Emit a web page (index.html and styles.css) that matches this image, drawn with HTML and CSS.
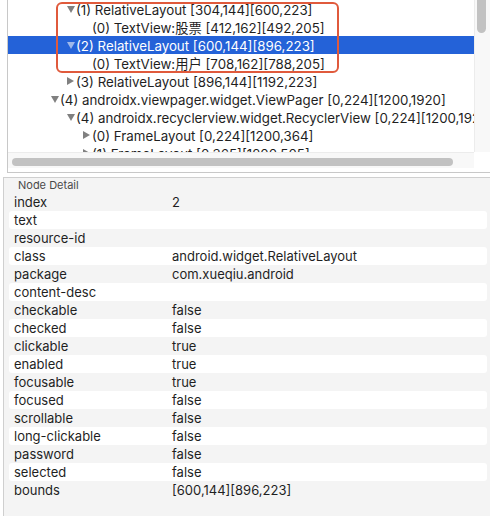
FILE: index.html
```html
<!DOCTYPE html>
<html>
<head>
<meta charset="utf-8">
<link rel="stylesheet" href="styles.css">
</head>
<body>
<div class="app">
  <div class="tree-pane">
    <div class="tree-body">
      <div class="tree-view">
        <div class="row d1"><span class="tog"><i class="tri down"></i></span><span class="lbl">(1) RelativeLayout [304,144][600,223]</span></div>
        <div class="row d2"><span class="tog"></span><span class="lbl">(0) TextView:股票 [412,162][492,205]</span></div>
        <div class="row d1 sel"><span class="tog"><i class="tri down"></i></span><span class="lbl">(2) RelativeLayout [600,144][896,223]</span></div>
        <div class="row d2"><span class="tog"></span><span class="lbl">(0) TextView:用户 [708,162][788,205]</span></div>
        <div class="row d1"><span class="tog"><i class="tri right"></i></span><span class="lbl">(3) RelativeLayout [896,144][1192,223]</span></div>
        <div class="row d0"><span class="tog"><i class="tri down"></i></span><span class="lbl">(4) androidx.viewpager.widget.ViewPager [0,224][1200,1920]</span></div>
        <div class="row d1"><span class="tog"><i class="tri down"></i></span><span class="lbl">(4) androidx.recyclerview.widget.RecyclerView [0,224][1200,1920]</span></div>
        <div class="row d2"><span class="tog"><i class="tri right"></i></span><span class="lbl">(0) FrameLayout [0,224][1200,364]</span></div>
        <div class="row d2"><span class="tog"><i class="tri right"></i></span><span class="lbl">(1) FrameLayout [0,365][1200,505]</span></div>
        <div class="mark"></div>
      </div>
      <div class="vscroll"><div class="vthumb"></div></div>
    </div>
    <div class="hscroll-row">
      <div class="hscroll"><div class="hthumb"></div></div>
      <div class="corner"></div>
    </div>
  </div>

  <div class="detail">
    <div class="legend">Node Detail</div>
    <div class="drow"><span class="k">index</span><span class="v">2</span></div>
    <div class="drow"><span class="k">text</span><span class="v"></span></div>
    <div class="drow"><span class="k">resource-id</span><span class="v"></span></div>
    <div class="drow"><span class="k">class</span><span class="v">android.widget.RelativeLayout</span></div>
    <div class="drow"><span class="k">package</span><span class="v">com.xueqiu.android</span></div>
    <div class="drow"><span class="k">content-desc</span><span class="v"></span></div>
    <div class="drow"><span class="k">checkable</span><span class="v">false</span></div>
    <div class="drow"><span class="k">checked</span><span class="v">false</span></div>
    <div class="drow"><span class="k">clickable</span><span class="v">true</span></div>
    <div class="drow"><span class="k">enabled</span><span class="v">true</span></div>
    <div class="drow"><span class="k">focusable</span><span class="v">true</span></div>
    <div class="drow"><span class="k">focused</span><span class="v">false</span></div>
    <div class="drow"><span class="k">scrollable</span><span class="v">false</span></div>
    <div class="drow"><span class="k">long-clickable</span><span class="v">false</span></div>
    <div class="drow"><span class="k">password</span><span class="v">false</span></div>
    <div class="drow"><span class="k">selected</span><span class="v">false</span></div>
    <div class="drow"><span class="k">bounds</span><span class="v">[600,144][896,223]</span></div>
  </div>
</div>
</body>
</html>
```

FILE: styles.css
```css
* { box-sizing: border-box; }
html, body {
  margin: 0;
  padding: 0;
  background: #ffffff;
}
body {
  width: 490px;
  height: 516px;
  overflow: hidden;
  font-family: Inter, "Liberation Sans", "Noto Sans CJK SC", sans-serif;
  font-size: 13px;
  color: #1f1f1f;
}
.app {
  display: flex;
  flex-direction: column;
  width: 490px;
  height: 516px;
}

/* ---------- tree pane ---------- */
.tree-pane {
  margin-left: 7px;
  border-left: 1px solid #c8c8c8;
  border-bottom: 1px solid #c8c8c8;
  padding-bottom: 4px;
  background: #ffffff;
}
.tree-body {
  display: flex;
  height: 152px;
}
.tree-view {
  position: relative;
  width: 466px;
  height: 152px;
  overflow: hidden;
  background: #ffffff;
  font-size: 13.3px;
}
.row {
  display: flex;
  align-items: center;
  height: 18px;
  line-height: 18px;
  white-space: nowrap;
}
.row.d0 { padding-left: 36px; }
.row.d1 { padding-left: 52px; }
.row.d2 { padding-left: 68px; }
.row.sel {
  background: #2462d8;
  color: #ffffff;
}
.tog {
  flex: none;
  width: 16px;
  height: 18px;
  display: flex;
  align-items: center;
}
.tri {
  display: block;
  width: 0;
  height: 0;
}
.tri.down {
  margin-left: 7px;
  border-left: 4px solid transparent;
  border-right: 4px solid transparent;
  border-top: 7px solid #808080;
}
.tri.right {
  margin-left: 7px;
  border-top: 4px solid transparent;
  border-bottom: 4px solid transparent;
  border-left: 7px solid #808080;
}
.sel .tri.down { border-top-color: #9fb9ea; }
.lbl { flex: none; padding-top: 1px; }

.mark {
  position: absolute;
  left: 48px;
  top: 2px;
  width: 283px;
  height: 71px;
  border: 2px solid #e05a3c;
  border-radius: 6px;
}

.vscroll {
  width: 16px;
  height: 152px;
  background: #f8f8f8;
  border-left: 1px solid #ececec;
  padding-left: 2px;
}
.vthumb {
  width: 9px;
  height: 33px;
  background: #c2c2c2;
  border-radius: 0 0 5px 5px;
}
.hscroll-row {
  display: flex;
  height: 16px;
}
.hscroll {
  width: 466px;
  height: 16px;
  background: #f8f8f8;
  border-top: 1px solid #ececec;
  padding: 5px 0 0 4px;
}
.hthumb {
  width: 441px;
  height: 8px;
  background: #c2c2c2;
  border-radius: 4px;
}
.corner {
  width: 16px;
  height: 16px;
  background: #ffffff;
}

/* ---------- detail ---------- */
.detail {
  margin-top: 4px;
  margin-left: 3px;
  flex: 1;
  border-top: 1px solid #cfcfcf;
  border-left: 1px solid #cfcfcf;
  background: #f4f4f4;
  padding: 0 3px 0 5px;
}
.legend {
  height: 15px;
  line-height: 14px;
  padding-left: 9px;
  font-size: 11px;
  color: #4a4a4a;
}
.drow {
  display: flex;
  height: 18px;
  line-height: 18px;
  border-radius: 3px;
  padding-left: 5px;
  color: #1f1f1f;
}
.drow:nth-of-type(odd) { background: #ffffff; }
.drow:nth-of-type(even) { background: transparent; }
.k { width: 158px; flex: none; }
.v { flex: 1; }
```
